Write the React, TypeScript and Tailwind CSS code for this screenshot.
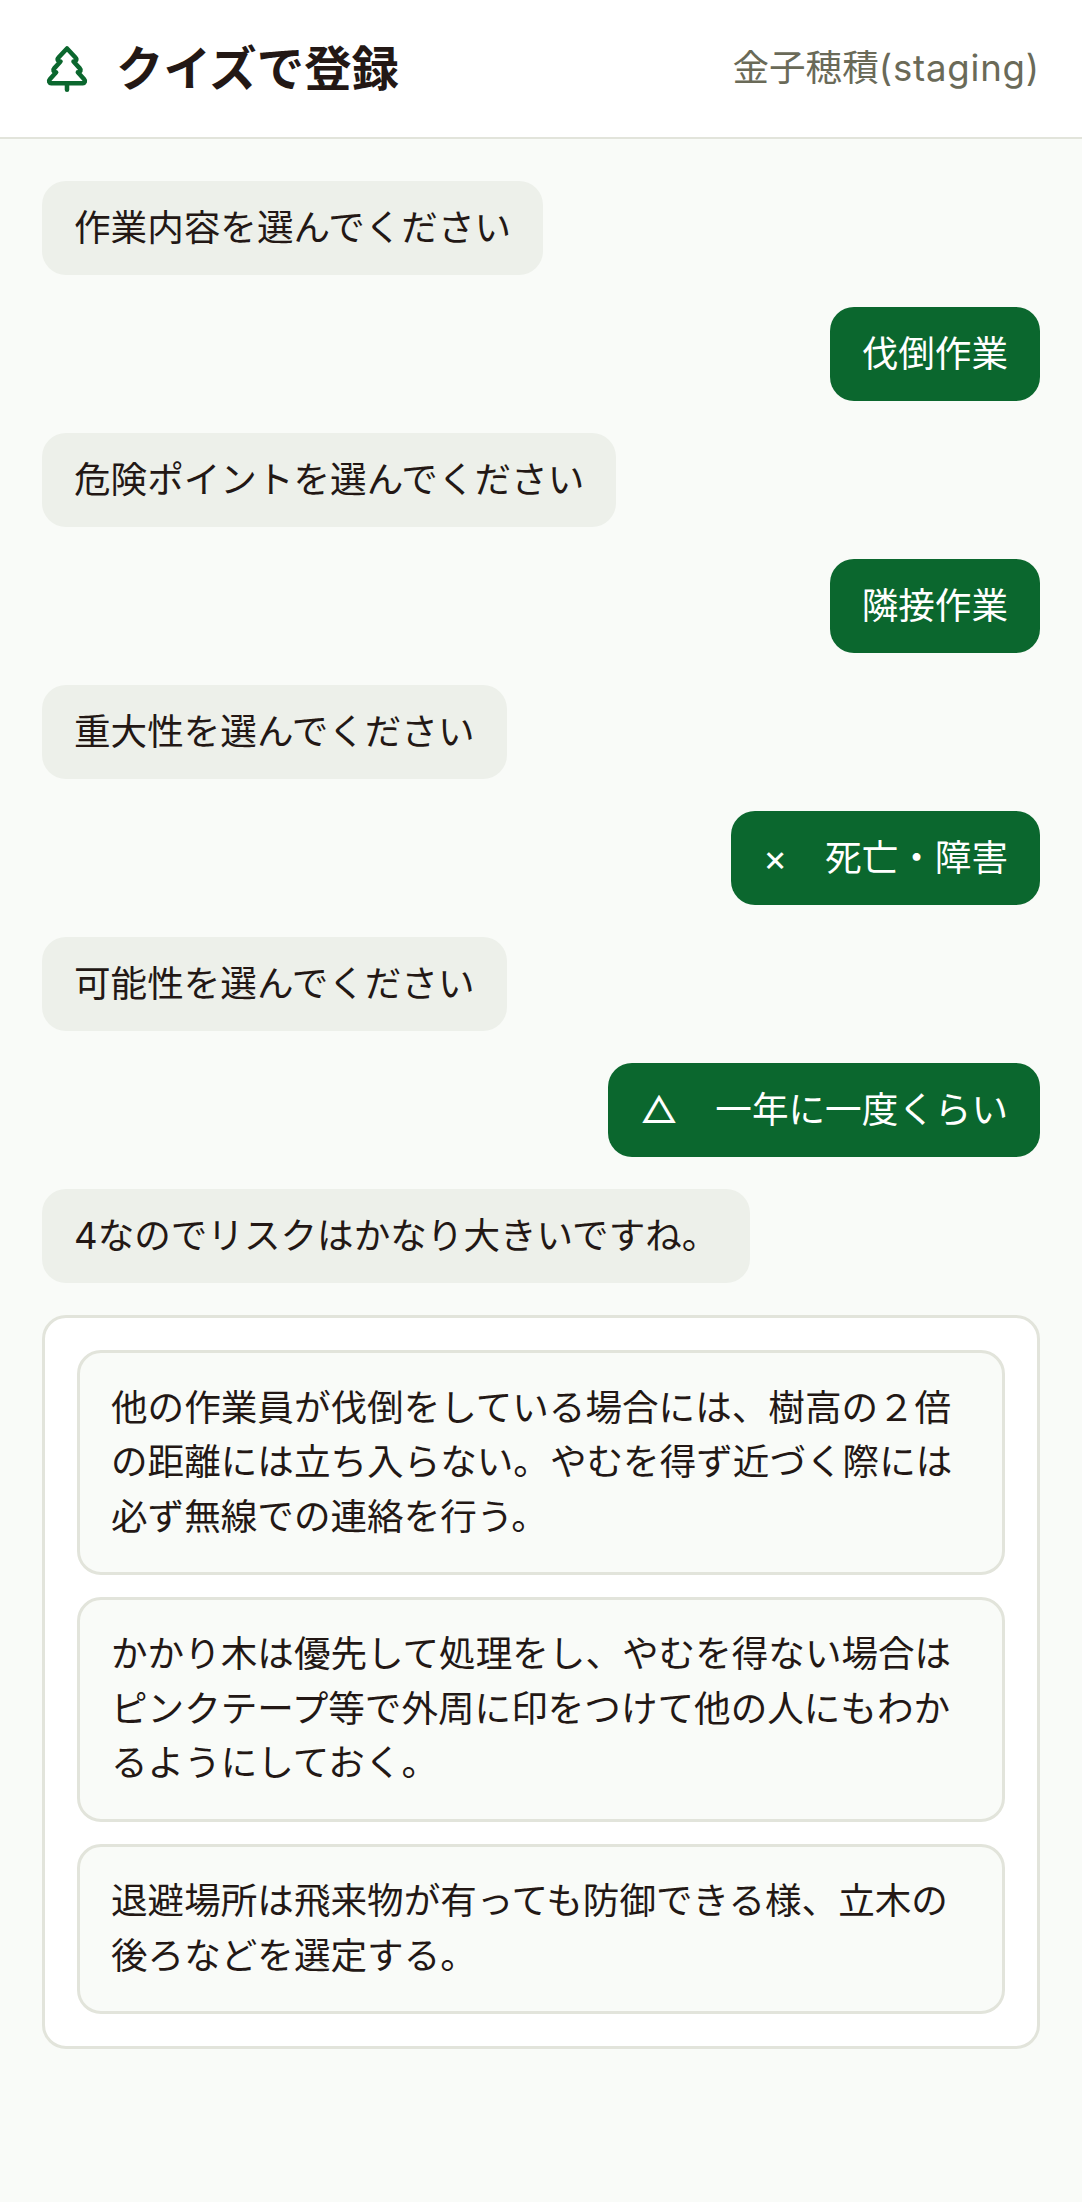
import { TreePine } from "lucide-react";

const FONT = "font-['Inter','Noto_Sans_CJK_JP',sans-serif]";

function Question({ text }: { text: string }) {
    return (
        <div className="flex justify-start">
            <div className="rounded-[24px] bg-[#edf0ea] px-8 py-5 text-[36.6px] leading-[54px] text-[#231815]">{text}</div>
        </div>
    )
}

function Answer({ mark, text }: { mark?: string; text: string }) {
    return (
        <div className="flex justify-end">
            <div className="flex gap-[38px] rounded-[24px] bg-[#0b672e] px-8 py-5 text-[36.6px] leading-[54px] text-white">
                {mark && <span>{mark}</span>}
                <span>{text}</span>
            </div>
        </div>
    )
}

function Advice({ text }: { text: string }) {
    return (
        <div className="rounded-[24px] border-[3px] border-[#e2e4db] bg-[#f9fbf8] px-[31px] py-[27.5px] text-[36.6px] leading-[54.6px] text-[#231815]">
            {text}
        </div>
    )
}

export default function App() {
    return (
        <div className={`min-h-[2202px] bg-[#f9fbf8] ${FONT}`}>
            <header className="flex h-[139px] items-center justify-between border-b-2 border-[#e2e4db] bg-white pl-[41px] pr-[42px]">
                <div className="flex items-center gap-[23px]">
                    <TreePine size={52} strokeWidth={2.1} className="text-[#0b672e]" />
                    <h1 className="text-[47.4px] font-bold text-[#231815]">クイズで登録</h1>
                </div>
                <span className="text-[36.6px] text-[#6a6a58]">
                    金子穂積<span className="tracking-[0.8px]">(staging)</span>
                </span>
            </header>
            <main className="flex flex-col gap-8 px-[42px] pt-[42px]">
                <Question text="作業内容を選んでください" />
                <Answer text="伐倒作業" />
                <Question text="危険ポイントを選んでください" />
                <Answer text="隣接作業" />
                <Question text="重大性を選んでください" />
                <Answer mark="×" text="死亡・障害" />
                <Question text="可能性を選んでください" />
                <Answer mark="△" text="一年に一度くらい" />
                <Question text="4なのでリスクはかなり大きいですね。" />
                <section className="flex flex-col gap-[22px] rounded-[24px] border-[3px] border-[#e2e4db] bg-white p-8">
                    <Advice text="他の作業員が伐倒をしている場合には、樹高の２倍の距離には立ち入らない。やむを得ず近づく際には必ず無線での連絡を行う。" />
                    <Advice text="かかり木は優先して処理をし、やむを得ない場合はピンクテープ等で外周に印をつけて他の人にもわかるようにしておく。" />
                    <Advice text="退避場所は飛来物が有っても防御できる様、立木の後ろなどを選定する。" />
                </section>
            </main>
        </div>
    )
}
